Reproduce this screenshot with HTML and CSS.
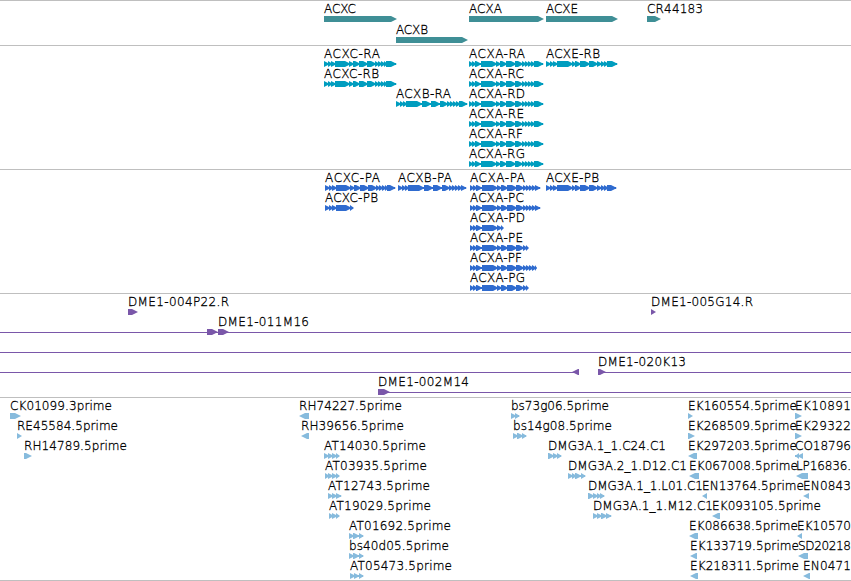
FILE: index.html
```html
<!DOCTYPE html>
<html lang="en">
<head>
  <meta charset="UTF-8">
  <meta name="viewport" content="width=device-width, initial-scale=1.0">
  <link rel="stylesheet" href="styles.css">
  <title>Genome Browser</title>
</head>

<body>

<div class="browser">
  <svg class="track gene" id="gene"></svg>
  <svg class="track transcript" id="transcript"></svg>
  <svg class="track protein" id="protein"></svg>
  <svg class="track bac" id="bac"></svg>
  <svg class="track est" id="est"></svg>
</div>

<script src="tracks.js"></script>
</body>
</html>
```
FILE: styles.css
```css
body {
  margin: 0;
  background-color: #fff;
  overflow: hidden;
}

.browser {
  display: flex;
  flex-direction: column;
  width: 851px;
  border-bottom: 1px solid #bfbfbf;
}

.track {
  display: block;
  box-sizing: border-box;
  width: 851px;
  border-top: 1px solid #bfbfbf;
  overflow: hidden;
}

.track text {
  font-family: "DejaVu Sans Light", "DejaVu Sans", sans-serif;
  font-size: 12px;
  font-weight: 200;
  fill: #000;
  stroke: #000;
  stroke-width: 0.3px;
}

.gene {
  height: 45px;
  color: #3f8f96;
}

.transcript {
  height: 124px;
  color: #009dbf;
}

.protein {
  height: 124px;
  color: #2f6bcf;
}

.bac {
  height: 104px;
  color: #7a57a9;
}

.est {
  height: 183px;
  color: #87bbdd;
}

.glyph {
  fill: currentColor;
}

.link {
  fill: currentColor;
  shape-rendering: crispEdges;
}
```
FILE: tracks.js
```js
const NS = 'http://www.w3.org/2000/svg';

// exon edges, relative to the start of the feature
const exC = [[0, 4], [4, 7], [7, 11], [11, 25], [25, 29], [29, 35], [35, 43], [43, 51], [51, 54], [54, 57], [57, 60], [60, 62], [62, 73]];
const exB = [[0, 4], [4, 7], [7, 10], [10, 25], [26, 34], [35, 43], [44, 51], [51, 54], [54, 57], [57, 60], [60, 63], [63, 72]];
const exA = [[0, 3], [3, 6], [6, 11], [12, 27], [27, 31], [31, 37], [37, 46], [46, 53], [53, 56], [56, 59], [59, 62], [62, 65], [65, 75]];
const exE = [[0, 4], [4, 7], [7, 11], [11, 26], [26, 29], [29, 34], [34, 43], [43, 51], [51, 55], [55, 58], [58, 61], [61, 72]];

// keep the exons up to a given length
function cut(exons, end) {
  return exons.filter(e => e[0] < end - 1).map(e => [e[0], Math.min(e[1], end)]);
}

// row, x, label, label width, exons, direction
const tracks = {
  gene: { pitch: 21, items: [
    [0, 324, 'ACXC', 32, [[0, 73]]],
    [0, 469, 'ACXA', 33, [[0, 75]]],
    [0, 546, 'ACXE', 32, [[0, 72]]],
    [0, 647, 'CR44183', 56, [[0, 14]]],
    [1, 396, 'ACXB', 32, [[0, 72]]]
  ] },
  transcript: { pitch: 20, items: [
    [0, 324, 'ACXC-RA', 56, exC],
    [0, 469, 'ACXA-RA', 56, exA],
    [0, 546, 'ACXE-RB', 54, exE],
    [1, 324, 'ACXC-RB', 55, exC],
    [1, 469, 'ACXA-RC', 55, exA],
    [2, 396, 'ACXB-RA', 55, exB],
    [2, 469, 'ACXA-RD', 56, exA],
    [3, 469, 'ACXA-RE', 55, exA],
    [4, 469, 'ACXA-RF', 54, exA],
    [5, 469, 'ACXA-RG', 56, exA]
  ] },
  protein: { pitch: 20, items: [
    [0, 325, 'ACXC-PA', 55, cut(exC, 71)],
    [0, 398, 'ACXB-PA', 54, cut(exB, 69)],
    [0, 470, 'ACXA-PA', 55, cut(exA, 71)],
    [0, 546, 'ACXE-PB', 53, cut(exE, 71)],
    [1, 325, 'ACXC-PB', 53, cut(exC, 29)],
    [1, 470, 'ACXA-PC', 54, cut(exA, 71)],
    [2, 470, 'ACXA-PD', 55, cut(exA, 34)],
    [3, 470, 'ACXA-PE', 53, cut(exA, 60)],
    [4, 470, 'ACXA-PF', 52, cut(exA, 67)],
    [5, 470, 'ACXA-PG', 55, cut(exA, 59)]
  ] },
  bac: { pitch: 20, items: [
    [0, 128, 'DME1-004P22.R', 101, [[0, 10]]],
    [0, 651, 'DME1-005G14.R', 102, [[0, 5]]],
    [1, 207, '', 0, [[0, 11]]],
    [1, 218, 'DME1-011M16', 91, [[0, 11]]],
    [3, 572, '', 0, [[0, 7]], 'left'],
    [3, 598, 'DME1-020K13', 88, [[0, 8]]],
    [4, 378, 'DME1-002M14', 91, [[0, 12]]]
  ], links: [[1, 0, 851], [2, 0, 851], [3, 0, 579], [3, 598, 851], [4, 378, 851]] },
  est: { pitch: 20, items: [
    [0, 10, 'CK01099.3prime', 102, [[0, 11]]],
    [1, 17, 'RE45584.5prime', 101, [[0, 5]]],
    [2, 24, 'RH14789.5prime', 103, [[0, 8]]],
    [0, 299, 'RH74227.5prime', 103, [[0, 10]], 'left'],
    [1, 301, 'RH39656.5prime', 103, [[0, 8]], 'left'],
    [2, 324, 'AT14030.5prime', 102, [[0, 4], [4, 8], [8, 12], [12, 16]]],
    [3, 325, 'AT03935.5prime', 102, [[0, 3], [3, 7], [7, 11], [11, 15]]],
    [4, 328, 'AT12743.5prime', 102, [[0, 4], [4, 8], [8, 14]]],
    [5, 329, 'AT19029.5prime', 102, [[0, 3], [3, 7], [7, 11]]],
    [6, 349, 'AT01692.5prime', 102, [[0, 4], [4, 9], [10, 15]]],
    [7, 349, 'bs40d05.5prime', 100, [[0, 4], [4, 9], [10, 15]]],
    [8, 350, 'AT05473.5prime', 102, [[0, 4], [4, 8], [9, 14]]],
    [0, 511, 'bs73g06.5prime', 98, [[0, 4], [4, 9]]],
    [1, 513, 'bs14g08.5prime', 99, [[0, 4], [4, 9], [9, 14]]],
    [2, 548, 'DMG3A.1_1.C24.C1', 118, [[0, 5], [5, 9], [9, 14]]],
    [3, 568, 'DMG3A.2_1.D12.C1', 119, [[0, 4], [4, 7], [7, 12], [13, 18]]],
    [4, 588, 'DMG3A.1_1.L01.C1', 115, [[0, 5], [5, 9], [9, 12], [12, 17]]],
    [5, 593, 'DMG3A.1_1.M12.C1', 120, [[0, 4], [4, 8], [8, 13], [13, 19]]],
    [0, 688, 'EK160554.5prime', 109, [[0, 5]]],
    [1, 688, 'EK268509.5prime', 109, [[0, 7]]],
    [2, 688, 'EK297203.5prime', 109, [[0, 9]], 'left'],
    [3, 689, 'EK067008.5prime', 109, [[0, 10]], 'left'],
    [4, 702, 'EN13764.5prime', 102, [[0, 5]], 'left'],
    [5, 712, 'EK093105.5prime', 109, [[0, 8]], 'left'],
    [6, 689, 'EK086638.5prime', 109, [[0, 9]], 'left'],
    [7, 690, 'EK133719.5prime', 109, [[0, 7]], 'left'],
    [8, 690, 'EK218311.5prime', 109, [[0, 8]], 'left'],
    [0, 795, 'EK10891', 56, [[0, 7]]],
    [1, 795, 'EK29322', 56, [[0, 7]]],
    [2, 795, 'CO18796', 56, [[0, 4], [4, 8]], 'left'],
    [3, 796, 'LP16836.', 55, [[0, 12]], 'left'],
    [4, 803, 'EN0843', 48, [[0, 6]], 'left'],
    [6, 797, 'EK10570', 54, [[0, 5]], 'left'],
    [7, 798, 'SD20218', 53, [[0, 10]], 'left'],
    [8, 803, 'EN0471', 48, [[0, 7]], 'left']
  ] }
};

function add(parent, name, attrs) {
  const el = document.createElementNS(NS, name);
  for (const key in attrs) el.setAttribute(key, attrs[key]);
  parent.appendChild(el);
  return el;
}

// box that ends in an arrow head
function arrow(a, b, y, left) {
  const head = Math.min(6, b - a);
  if (left) return `M${b} ${y - 3}H${a + head}L${a} ${y}L${a + head} ${y + 3}H${b}Z`;
  return `M${a} ${y - 3}H${b - head}L${b} ${y}L${b - head} ${y + 3}H${a}Z`;
}

for (const id in tracks) {
  const svg = document.getElementById(id);
  const track = tracks[id];

  for (const [row, a, b] of track.links || []) {
    add(svg, 'rect', { class: 'link', x: a, y: 18 + row * track.pitch, width: b - a, height: 1 });
  }

  for (const [row, x, label, width, exons, dir] of track.items) {
    const y = 18 + row * track.pitch;
    const left = dir === 'left';
    const last = exons.length - 1;
    if (last > 0) {
      add(svg, 'rect', { class: 'link', x: x, y: y - 1, width: exons[last][1] - 1, height: 2 });
    }
    // heads run a little into the next exon
    exons.forEach((e, i) => {
      const a = x + e[0] - (left && i > 0 ? 2 : 0);
      const b = x + e[1] + (!left && i < last ? 2 : 0);
      add(svg, 'path', { class: 'glyph', d: arrow(a, b, y, left) });
    });
    if (label) {
      add(svg, 'text', { x: x, y: y - 6, textLength: width }).textContent = label;
    }
  }
}
```
